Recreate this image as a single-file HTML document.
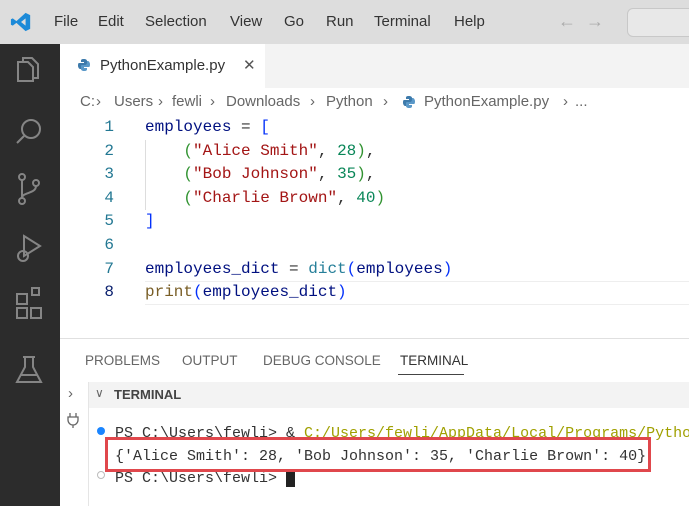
<!DOCTYPE html><html><head><style>
body{margin:0;width:689px;height:506px;overflow:hidden;background:#fff;font-family:"Liberation Sans",sans-serif;position:relative}
.a{position:absolute}
.mono{font-family:"Liberation Mono",monospace}
.bc span{position:absolute}
</style></head><body>
<div class="a" style="left:0;top:0;width:689px;height:44px;background:#dddddd"></div>
<svg class="a" style="left:10px;top:11px" width="22" height="22" viewBox="0 0 24 24"><path d="M17 2l5 2.5v15L17 22 7 13l-4 3-2-1V9l2-1 4 3 10-9zm0 6l-5 4 5 4z" fill="#1c8ad8"/></svg>
<div class="a" style="top:13px;left:54px;font-size:15px;color:#333;word-spacing:0">
<span style="position:absolute;left:0">File</span><span style="position:absolute;left:44px">Edit</span><span style="position:absolute;left:91px">Selection</span><span style="position:absolute;left:176px">View</span><span style="position:absolute;left:230px">Go</span><span style="position:absolute;left:272px">Run</span><span style="position:absolute;left:320px">Terminal</span><span style="position:absolute;left:400px">Help</span></div>
<div class="a" style="left:558px;top:11px;font-size:18px;color:#aaa">←&nbsp;&nbsp;→</div>
<div class="a" style="left:627px;top:8px;width:70px;height:27px;border:1px solid #c8c8c8;border-radius:6px;background:#e8e8e8"></div>
<div class="a" style="left:0;top:44px;width:60px;height:462px;background:#2c2c2c"></div>
<svg class="a" style="left:14px;top:56px" width="32" height="340" fill="none" stroke="#858585" stroke-width="2">
<path d="M4 6h10l5 5v14H4z M9 6V2h9l6 6v14h-5"/>
<circle cx="17" cy="73" r="9"/><path d="M10 80l-7 7"/>
<circle cx="8" cy="121" r="3"/><circle cx="8" cy="145" r="3"/><circle cx="22" cy="127" r="3"/><path d="M8 124v18 M22 130c0 8-14 6-14 12"/>
<path d="M10 180l16 10-16 10z"/><circle cx="9" cy="200" r="5"/>
<path d="M3 238h10v10H3z M3 252h10v10H3z M17 252h10v10H17z M18 232l7 0 0 7-7 0z"/>
<path d="M11 301v10l-8 15h24l-8-15v-10 M9 301h12 M6 319h18"/>
</svg>
<div class="a" style="left:60px;top:44px;width:629px;height:44px;background:#f3f3f3"></div>
<div class="a" style="left:60px;top:44px;width:205px;height:44px;background:#fff"></div>
<svg class="a" style="left:78px;top:59px" width="12" height="12" viewBox="0 0 12 12"><path d="M6 0C3 0 3 1 3 2v1h3v1H1C0 4 0 6 0 7s1 3 2 3h1V8c0-1 1-2 2-2h3c1 0 1-1 1-2V2C9 1 8 0 6 0z" fill="#3d7aab"/><path d="M6 12c3 0 3-1 3-2V9H6V8h5c1 0 1-2 1-3s-1-3-2-3H9v2c0 1-1 2-2 2H4c-1 0-1 1-1 2v2c0 1 1 2 3 2z" fill="#5a98c8"/></svg>
<div class="a" style="left:100px;top:57px;font-size:15px;color:#333">PythonExample.py</div>
<div class="a" style="left:243px;top:56px;font-size:15px;color:#555">✕</div>
<div class="a bc" style="left:0;top:93px;font-size:15px;color:#666"><span style="left:80px">C:</span><span style="left:96px">›</span><span style="left:114px">Users</span><span style="left:158px">›</span><span style="left:172px">fewli</span><span style="left:210px">›</span><span style="left:226px">Downloads</span><span style="left:310px">›</span><span style="left:326px">Python</span><span style="left:383px">›</span><span style="left:424px">PythonExample.py</span><span style="left:563px">›</span><span style="left:575px">...</span></div>
<svg class="a" style="left:403px;top:96px" width="12" height="12" viewBox="0 0 12 12"><path d="M6 0C3 0 3 1 3 2v1h3v1H1C0 4 0 6 0 7s1 3 2 3h1V8c0-1 1-2 2-2h3c1 0 1-1 1-2V2C9 1 8 0 6 0z" fill="#3d7aab"/><path d="M6 12c3 0 3-1 3-2V9H6V8h5c1 0 1-2 1-3s-1-3-2-3H9v2c0 1-1 2-2 2H4c-1 0-1 1-1 2v2c0 1 1 2 3 2z" fill="#5a98c8"/></svg>
<div class="a" style="left:145px;top:281px;width:544px;height:22px;border-top:1px solid #eee;border-bottom:1px solid #eee"></div>
<div class="a" style="left:145px;top:140px;width:1px;height:70px;background:#ddd"></div>
<div class="a mono" style="left:100px;top:116px;font-size:16px;line-height:23.6px;color:#237893;text-align:right;width:14px">1<br>2<br>3<br>4<br>5<br>6<br>7<br><span style="color:#0b216f">8</span></div>
<div class="a mono" style="left:145px;top:116px;font-size:16px;line-height:23.6px;color:#001080;white-space:pre">employees <span style="color:#333">=</span> <span style="color:#0431fa">[</span>
    <span style="color:#319331">(</span><span style="color:#a31515">"Alice Smith"</span><span style="color:#333">,</span> <span style="color:#098658">28</span><span style="color:#319331">)</span><span style="color:#333">,</span>
    <span style="color:#319331">(</span><span style="color:#a31515">"Bob Johnson"</span><span style="color:#333">,</span> <span style="color:#098658">35</span><span style="color:#319331">)</span><span style="color:#333">,</span>
    <span style="color:#319331">(</span><span style="color:#a31515">"Charlie Brown"</span><span style="color:#333">,</span> <span style="color:#098658">40</span><span style="color:#319331">)</span>
<span style="color:#0431fa">]</span>

employees_dict <span style="color:#333">=</span> <span style="color:#267f99">dict</span><span style="color:#0431fa">(</span>employees<span style="color:#0431fa">)</span>
<span style="color:#795e26">print</span><span style="color:#0431fa">(</span>employees_dict<span style="color:#0431fa">)</span></div>
<div class="a" style="left:60px;top:338px;width:629px;height:1px;background:#e0e0e0"></div>
<div class="a" style="top:353px;left:85px;font-size:13.5px;color:#666"><span style="position:absolute;left:0">PROBLEMS</span><span style="position:absolute;left:97px">OUTPUT</span><span style="position:absolute;left:178px">DEBUG&nbsp;CONSOLE</span><span style="position:absolute;left:315px;color:#333">TERMINAL</span></div>
<div class="a" style="left:398px;top:374px;width:66px;height:1px;background:#444"></div>
<div class="a" style="left:60px;top:382px;width:629px;height:124px;background:#fff"></div>
<div class="a" style="left:88px;top:382px;width:601px;height:26px;background:#f3f3f3"></div>
<div class="a" style="left:88px;top:382px;width:1px;height:124px;background:#e5e5e5"></div>
<div class="a" style="left:68px;top:385px;font-size:15px;color:#666">›</div>
<div class="a" style="left:95px;top:386px;font-size:12px;color:#666">∨</div>
<div class="a" style="left:114px;top:387px;font-size:13px;font-weight:bold;color:#444">TERMINAL</div>
<svg class="a" style="left:66px;top:412px" width="14" height="16" fill="none" stroke="#666" stroke-width="1.3"><path d="M4 1v4 M10 1v4 M2 5h10v3a5 5 0 01-10 0z M7 13v3"/></svg>
<div class="a" style="left:97px;top:427px;width:8px;height:8px;border-radius:50%;background:#1a85ff"></div>
<div class="a" style="left:97px;top:471px;width:6px;height:6px;border-radius:50%;border:1px solid #bbb"></div>
<div class="a mono" style="left:115px;top:423px;font-size:15px;line-height:22.5px;color:#333;white-space:pre">PS C:\Users\fewli&gt; &amp; <span style="color:#a0a000">C:/Users/fewli/AppData/Local/Programs/Python</span>
{'Alice Smith': 28, 'Bob Johnson': 35, 'Charlie Brown': 40}
PS C:\Users\fewli&gt; <span style="background:#222">&nbsp;</span></div>
<div class="a" style="left:105px;top:437px;width:546px;height:35px;border:3px solid #e0474c;box-sizing:border-box"></div>
</body></html>
